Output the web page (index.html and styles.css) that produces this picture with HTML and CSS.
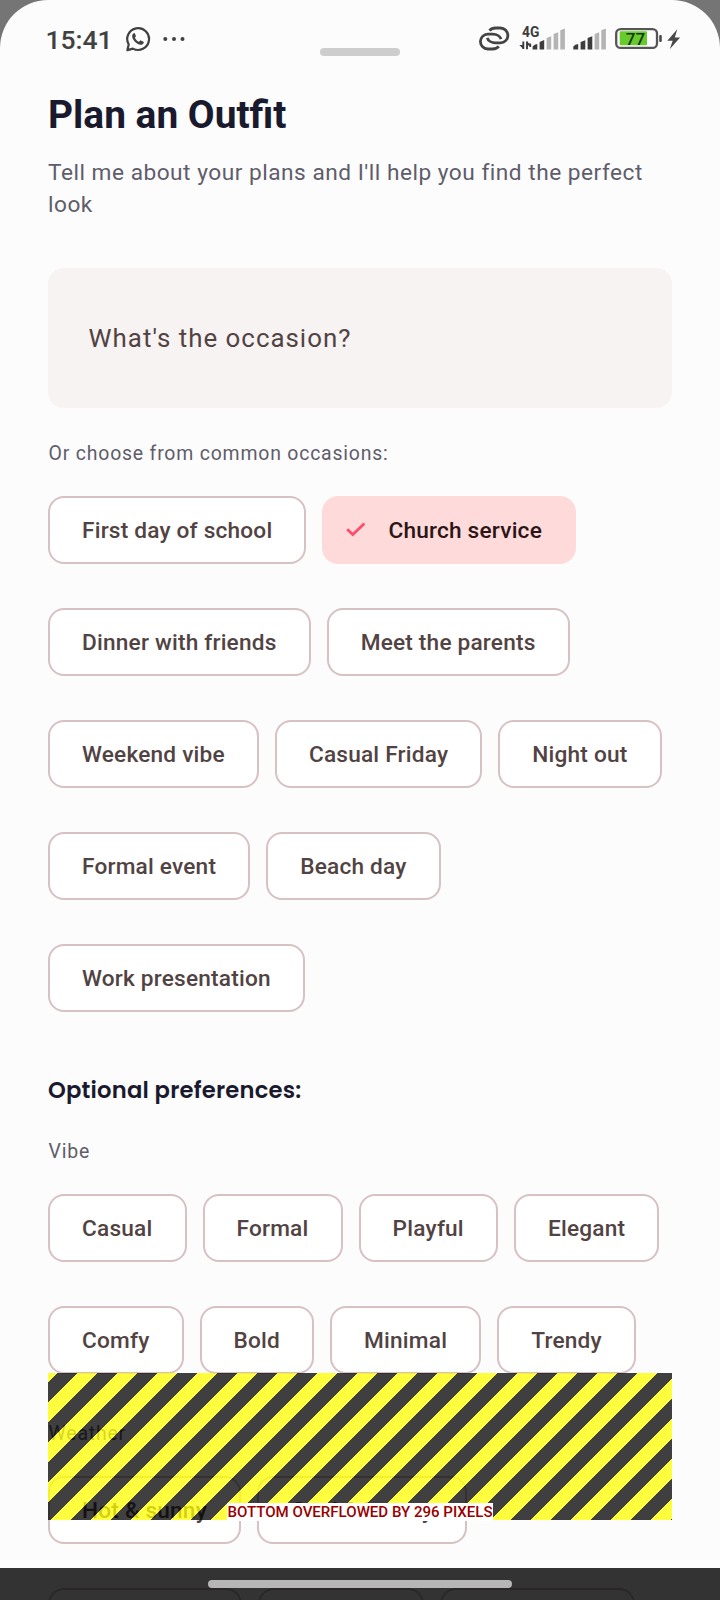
FILE: index.html
```html
<!DOCTYPE html>
<html lang="en">
<head>
<meta charset="utf-8">
<title>Plan an Outfit</title>
<link rel="stylesheet" href="styles.css">
</head>
<body>
<main class="sheet">
  <header class="status">
    <span class="time">15:41</span>
    <svg class="whatsapp" width="26" height="28" viewBox="125 25 26 28" fill="none" stroke="#414141" stroke-width="2.200">
      <path d="M127.400 50.100l1.300-5.600a10.900 10.900 0 1 1 4.200 4.100z" stroke-linejoin="round"/>
      <path d="M133.600 33.200c-3 2.300-.7 6.300 1.300 8.500 2 2.200 6.500 5 8.800 1.300.5-1-.1-1.600-2.900-2.600-.9-.3-1.300 1.600-2.100 1.300-1.500-.6-3-2.100-3.700-3.600-.3-.7 1.200-1.200.9-2-.9-2.900-1.300-3.500-2.300-2.900z" fill="#414141" stroke="none"/>
    </svg>
    <svg class="dots" width="24" height="28" viewBox="162 25 24 28" fill="#414141">
      <circle cx="165.300" cy="39" r="2"/><circle cx="174" cy="39" r="2"/><circle cx="182.500" cy="39" r="2"/>
    </svg>
    <span class="spacer"></span>
    <svg width="34" height="28" viewBox="477 25 34 28" fill="none" stroke="#444" stroke-width="2.800">
      <path d="M489.500 30.600c1.400-1.800 3.800-2.600 6.200-2.600h4.800a7.400 7.400 0 0 1 0 14.800h-5c-4 0-7.500-2.200-8.200-5"/>
      <path d="M498.800 46.400c-1.400 1.800-3.800 2.600-6.200 2.600h-4.800a7.400 7.400 0 0 1 0-14.800h5c4 0 7.500 2.200 8.200 5"/>
    </svg>
    <svg class="signal-4g" width="46" height="28" viewBox="519 25 46 28" fill="#3c3c3c">
      <text class="net" x="522" y="37.200">4G</text>
      <path d="M523.300 41.500v7.500M527 49.300V41.500M530.200 43.500v3.400" stroke="#3c3c3c" stroke-width="1.900"/>
      <path d="M519.300 45h4v4zM531.300 45.600h-4.300v-4z"/>
      <path d="M532.600 49.500v-3l2-1.700 2.700-.9v5.600zM539.600 49.500v-7.600l4.600-1.800v9.400z"/>
      <path d="M546.600 49.500V38l4.600-1.800v13.300zM553.600 49.500V34l4.600-1.800v17.300zM560.300 49.500V30.300l4.600-1.800v21z" fill="#b4b4b4"/>
    </svg>
    <svg class="signal" width="34" height="28" viewBox="573 25 34 28" fill="#3c3c3c">
      <path d="M573.300 49.500v-3l2-1.700 2.900-.9v5.600zM580.600 49.500V42l4.700-1.800v9.300zM587.600 49.500V38l4.700-1.800v13.300z"/>
      <path d="M594.600 49.500V34l4.600-1.800v17.300zM601.300 49.500V30.300l4.600-1.800v21z" fill="#b4b4b4"/>
    </svg>
    <svg class="battery" width="48" height="28" viewBox="615 25 48 28">
      <rect x="616.200" y="29.100" width="40.800" height="18.800" rx="4.500" fill="#fff" stroke="#555" stroke-width="2.300"/>
      <rect x="619.700" y="31.300" width="27.300" height="14" rx="1" fill="#67cb2b"/>
      <rect x="659.200" y="35" width="2.600" height="7" rx="1" fill="#4b4b4b"/>
      <text class="level" x="625.800" y="44.900">77</text>
    </svg>
    <svg class="bolt" width="14" height="28" viewBox="667 25 14 28" fill="#484848">
      <path d="M677.300 29.300L667.300 40.700h5.400l-3 8.500 10.400-11.700h-5.300z"/>
    </svg>
  </header>
  <div class="grabber"></div>

  <h1 class="title">Plan an Outfit</h1>
  <p class="subtitle">Tell me about your plans and I'll help you find the perfect look</p>
  <div class="field">What's the occasion?</div>

  <p class="caption">Or choose from common occasions:</p>
  <div class="rows">
    <div class="row"><div class="chip">First day of school</div><div class="chip selected"><svg width="20" height="16" viewBox="0 0 20 16" fill="none" stroke="#ff4d6d" stroke-width="2.800"><path d="M1.200 7.200l5.600 5.400L18.400 1.600"/></svg>Church service</div></div>
    <div class="row"><div class="chip">Dinner with friends</div><div class="chip">Meet the parents</div></div>
    <div class="row"><div class="chip">Weekend vibe</div><div class="chip">Casual Friday</div><div class="chip">Night out</div></div>
    <div class="row"><div class="chip">Formal event</div><div class="chip">Beach day</div></div>
    <div class="row"><div class="chip">Work presentation</div></div>
  </div>

  <h2 class="section">Optional preferences:</h2>
  <p class="caption vibe">Vibe</p>
  <div class="rows">
    <div class="row"><div class="chip">Casual</div><div class="chip">Formal</div><div class="chip">Playful</div><div class="chip">Elegant</div></div>
    <div class="row"><div class="chip">Comfy</div><div class="chip">Bold</div><div class="chip">Minimal</div><div class="chip">Trendy</div></div>
  </div>

  <p class="caption weather">Weather</p>
  <div class="rows">
    <div class="row"><div class="chip">Hot &amp; sunny</div><div class="chip">Cool &amp; breezy</div></div>
    <div class="row"><div class="chip blank-a"></div><div class="chip blank-b"></div><div class="chip blank-c"></div></div>
  </div>

  <div class="overflow"><span class="overflow-label">BOTTOM OVERFLOWED BY 296 PIXELS</span></div>
</main>
<nav class="navbar"><div class="pill"></div></nav>
</body>
</html>
```
FILE: styles.css
```css
* { box-sizing: border-box; }

body {
  margin: 0;
  width: 720px;
  height: 1600px;
  overflow: hidden;
  position: relative;
  background: #757575;
  font-family: Roboto, sans-serif;
}

.sheet {
  position: relative;
  height: 1600px;
  padding: 0 48px;
  overflow: hidden;
  background: #fcfcfc;
  border-radius: 48px 48px 0 0;
}

/* status bar */
.status {
  display: flex;
  align-items: center;
  height: 78px;
  margin: 0 -9px 0 -3px;
}
.status svg { flex: none; display: block; }
.time { width: 80px; font-size: 26.5px; font-weight: 500; line-height: 30px; color: #414141; padding: 2px 0 0 .4px; }
.dots { margin-left: 11px; }
.spacer { flex: 1; }
.signal-4g { margin-left: 8px; }
.signal { margin-left: 8px; }
.battery { margin-left: 8px; }
.bolt { margin-left: 4px; }
.net { font-size: 13.8px; font-weight: 700; }
.level { font-size: 17px; font-weight: 500; fill: #16350a; }

.grabber {
  position: absolute;
  left: 320px;
  top: 48px;
  width: 80px;
  height: 8px;
  border-radius: 4px;
  background: #cdcdce;
}

.title {
  margin: 13px 0 0;
  font-size: 38.88px;
  font-weight: 700;
  line-height: 48px;
  color: #1a1a2e;
}
.subtitle {
  margin: 18px 0 0;
  font-size: 22.68px;
  line-height: 32px;
  letter-spacing: .5px;
  color: #5f5d6b;
}
.field {
  display: flex;
  align-items: center;
  height: 140px;
  margin-top: 47px;
  padding: 0 40.6px;
  border-radius: 16px;
  background: #f7f3f2;
  font-size: 25.9px;
  letter-spacing: 1px;
  color: #524343;
}
.caption {
  margin: 33px 0 29px;
  padding-left: .6px;
  font-size: 19.44px;
  line-height: 26px;
  letter-spacing: .8px;
  color: #5f5d6b;
}

/* chips */
.rows { display: flex; flex-direction: column; gap: 44px; }
.row { display: flex; gap: 16px; }
.chip {
  display: flex;
  align-items: center;
  flex: none;
  height: 68px;
  padding: 0 32.1px 0 32px;
  border: 2px solid #d7c1c3;
  border-radius: 16px;
  background: #fff;
  font-size: 22.65px;
  font-weight: 500;
  letter-spacing: .2px;
  white-space: nowrap;
  color: #524343;
}
.selected {
  padding-left: 22px;
  gap: 22px;
  background: #ffdada;
  border-color: #ffdada;
  color: #2c1517;
}

.section {
  margin: 61px 0 0;
  font-family: Poppins, Inter, sans-serif;
  font-size: 22.68px;
  font-weight: 600;
  line-height: 34px;
  letter-spacing: .2px;
  color: #1a1a2e;
}
.vibe { margin-top: 32px; }
.weather { margin-top: 47px; }
.blank-a { width: 194px; }
.blank-b { width: 166px; }
.blank-c { width: 195px; }

/* overflow warning painted over the content */
.overflow {
  position: absolute;
  left: 48px;
  top: 1373px;
  width: 624px;
  height: 147px;
  display: flex;
  justify-content: center;
  align-items: flex-end;
  background: repeating-linear-gradient(135deg,
    rgba(255, 255, 0, .75) 0 7.071px,
    rgba(0, 0, 0, .75) 7.071px 21.213px,
    rgba(255, 255, 0, .75) 21.213px 28.284px);
}
.overflow-label {
  margin-bottom: -1px;
  background: #fff;
  color: #900;
  font-size: 15.05px;
  font-weight: 500;
  line-height: 18px;
  white-space: nowrap;
}

.navbar {
  position: absolute;
  left: 0;
  right: 0;
  bottom: 0;
  height: 32px;
  padding-top: 12px;
  background: rgba(0, 0, 0, .8);
}
.pill {
  width: 304px;
  height: 8px;
  margin: 0 auto;
  border-radius: 4px;
  background: #b6b6b6;
}
```
